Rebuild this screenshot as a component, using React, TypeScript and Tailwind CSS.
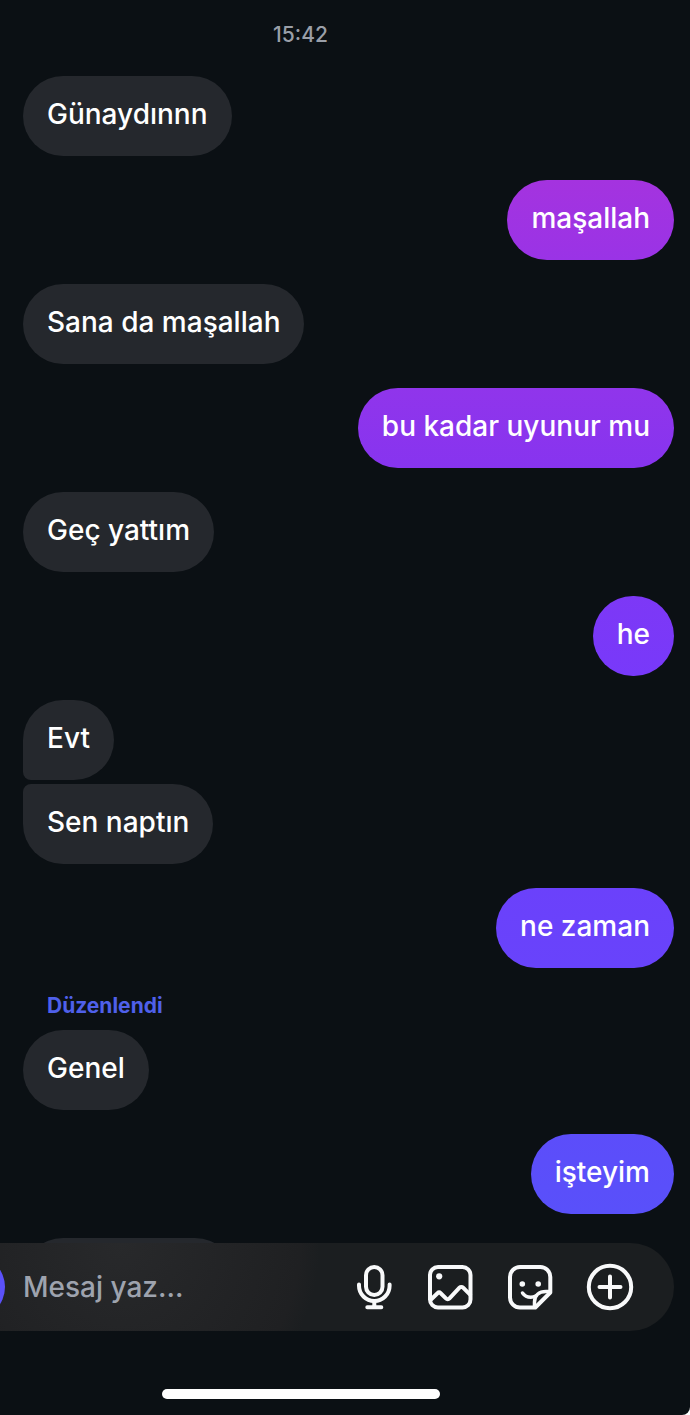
import React, { useState } from 'react';

type Message = {
  id: number;
  text: string;
  mine?: boolean;
  edited?: boolean;
  tone?: string;
  shape?: string;
  gap?: string;
};

const MESSAGES: Message[] = [
  { id: 1, text: 'Günaydınnn' },
  { id: 2, text: 'maşallah', mine: true, tone: 'from-[#a433df] to-[#9a33e6]' },
  { id: 3, text: 'Sana da maşallah' },
  { id: 4, text: 'bu kadar uyunur mu', mine: true, tone: 'from-[#9035eb] to-[#8734ef]' },
  { id: 5, text: 'Geç yattım' },
  { id: 6, text: 'he', mine: true, tone: 'from-[#7d38f6] to-[#7839fa]' },
  { id: 7, text: 'Evt', shape: 'rounded-bl-lg', gap: 'mb-1' },
  { id: 8, text: 'Sen naptın', shape: 'rounded-tl-lg' },
  { id: 9, text: 'ne zaman', mine: true, tone: 'from-[#6b41fb] to-[#6843fb]' },
  { id: 10, text: 'Genel', edited: true },
  { id: 11, text: 'işteyim', mine: true, tone: 'from-[#5c4dfa] to-[#5950fa]' },
];

const MicIcon = () => (
  <svg viewBox="0 0 48 48" className="size-12" fill="none" stroke="currentColor" strokeWidth="4" strokeLinecap="round" strokeLinejoin="round" aria-hidden="true">
    <rect x="20" y="4" width="16.5" height="28" rx="8.25" />
    <path d="M13 21.5v1.2a15.3 15.3 0 0 0 30.6 0v-1.2" />
    <path d="M28.3 38v6M21.3 44.2h14" />
  </svg>
);

const PhotoIcon = () => (
  <svg viewBox="0 0 48 48" className="size-12" fill="none" stroke="currentColor" strokeWidth="4" strokeLinecap="round" strokeLinejoin="round" aria-hidden="true">
    <rect x="4" y="4" width="40.5" height="40.5" rx="8" />
    <circle cx="13.2" cy="13.3" r="3.1" fill="currentColor" stroke="none" />
    <path d="M5 36.5l6.5-6.3a2.3 2.3 0 0 1 3.2 0l5.2 5.2a2.5 2.5 0 0 0 3.6 0l10-10.7a2.5 2.5 0 0 1 3.6 0l7 7" />
  </svg>
);

const StickerIcon = () => (
  <svg viewBox="0 0 48 48" className="size-12" fill="none" stroke="currentColor" strokeWidth="4" strokeLinecap="round" strokeLinejoin="round" aria-hidden="true">
    <path d="M44.3 29.5V14a10 10 0 0 0-10-10H14A10 10 0 0 0 4 14v20.5a10 10 0 0 0 10 10h15.3z" />
    <path d="M44 28.5h-4c-7 0-11.5 4-11.5 10.5v5" strokeWidth="3.5" />
    <path d="M16.5 30c2 2.8 4.800 4.300 8.200 4.300 2 0 3.600-.4 5-1.200" strokeWidth="3.5" />
    <circle cx="16.3" cy="21" r="2.8" fill="currentColor" stroke="none" />
    <circle cx="32.2" cy="21" r="2.8" fill="currentColor" stroke="none" />
  </svg>
);

const PlusIcon = () => (
  <svg viewBox="0 0 48 48" className="size-12" fill="none" stroke="currentColor" strokeWidth="4" strokeLinecap="round" aria-hidden="true">
    <circle cx="24" cy="24" r="21.2" />
    <path d="M24 13.5v21M13.5 24h21" />
  </svg>
);

const ACTIONS = [
  { label: 'Sesli mesaj', Icon: MicIcon },
  { label: 'Galeri', Icon: PhotoIcon },
  { label: 'Çıkartma', Icon: StickerIcon },
  { label: 'Daha fazla', Icon: PlusIcon },
];

const MessageRow: React.FC<{ message: Message }> = ({ message }) => {
  const { text, mine, edited, tone = '', shape = '', gap = 'mb-6' } = message;

  return (
    <li className={`flex flex-col ${mine ? 'items-end' : 'items-start'} ${gap}`}>
      {edited && (
        <span className="h-[38px] pl-6 text-[21px] leading-7 font-bold text-[#4f60ea]">Düzenlendi</span>
      )}
      <p
        className={`h-20 rounded-[40px] px-6 pt-5 text-[28px] leading-9 font-medium whitespace-nowrap text-white ${shape} ${
          mine ? `bg-linear-to-b ${tone}` : 'bg-[#25282d]'
        }`}
      >
        {text}
      </p>
    </li>
  );
};

export default function App() {
  const [draft, setDraft] = useState('');

  return (
    <div className="bg-white">
      <div className="flex min-h-screen flex-col overflow-hidden rounded-br-lg bg-[#0b1014] font-['Inter','Liberation_Sans',sans-serif]">
        <main className="pr-4 pl-[23px]">
          <div className="pt-[21px] pr-24 pb-[27px] text-center text-[21px] leading-7 font-medium text-[#9a9fa8]">
            <time>15:42</time>
          </div>
          <ul>
            {MESSAGES.map((message) => (
              <MessageRow key={message.id} message={message} />
            ))}
          </ul>
          {/* Next bubble, mostly hidden behind the composer */}
          <div className="h-[5px] overflow-hidden">
            <div className="h-20 w-[212px] rounded-[40px] bg-[#25282d]" />
          </div>
        </main>

        <form
          className="mr-4 flex h-[88px] items-center rounded-r-full bg-[#1b1e20] bg-[radial-gradient(ellipse_200px_200px_at_120px_0px,#28292b_0%,#222325_60%,#1f2022_90%,#1b1e20_100%)] pr-10"
          onSubmit={(e) => e.preventDefault()}
        >
          <span className="h-16 w-[5px] shrink-0 overflow-hidden">
            <span className="-ml-[59px] block size-16 rounded-full bg-[#5b51fa]" />
          </span>
          <input
            type="text"
            aria-label="Mesaj yaz"
            placeholder="Mesaj yaz..."
            value={draft}
            onChange={(e) => setDraft(e.target.value)}
            className="min-w-0 flex-1 bg-transparent pl-[18px] text-[28px] leading-9 font-medium text-white outline-none placeholder:text-[#9ea3ae]"
          />
          <div className="flex gap-8 text-[#f8f9fa]">
            {ACTIONS.map(({ label, Icon }) => (
              <button key={label} type="button" aria-label={label}>
                <Icon />
              </button>
            ))}
          </div>
        </form>

        <div className="mt-auto flex justify-center pr-[89px] pb-4">
          <div className="h-[10px] w-[278px] rounded-full bg-white" />
        </div>
      </div>
    </div>
  );
}
